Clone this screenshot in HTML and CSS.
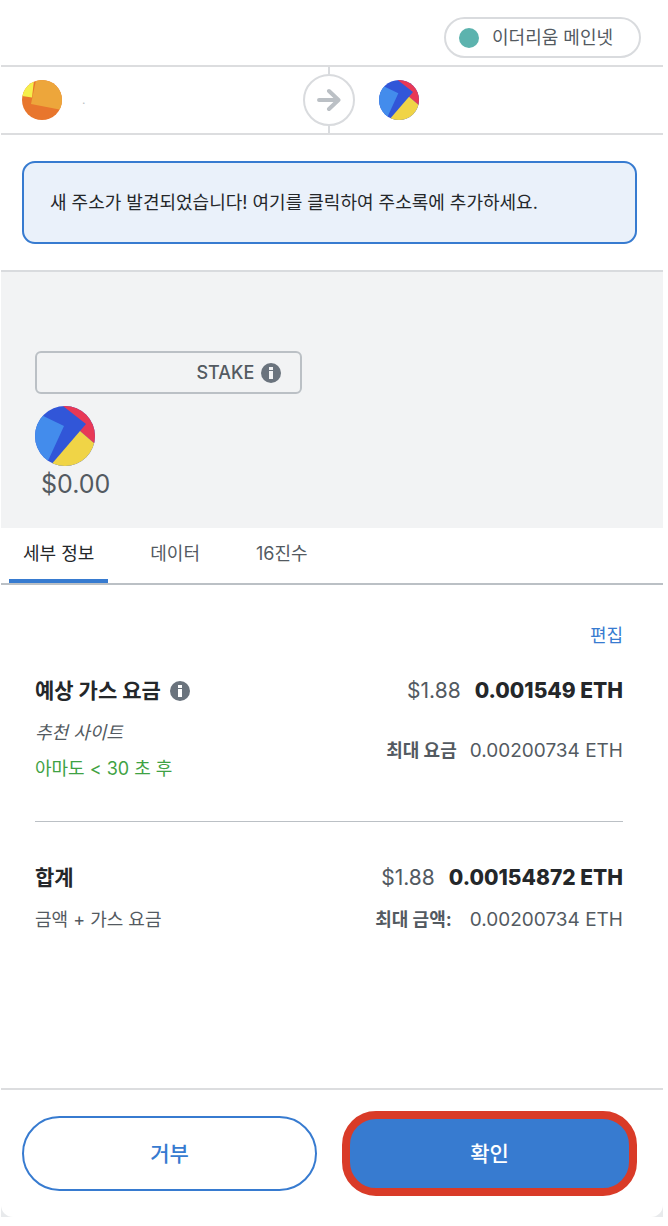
FILE: index.html
```
<!DOCTYPE html>
<html lang="ko">
<head>
  <meta charset="UTF-8" />
  <meta name="viewport" content="width=device-width, initial-scale=1.0"/>
  <title>거래 확인</title>
  <link rel="stylesheet" href="styles.css">
</head>
<body>
  <div class="popup">
    <div class="panel">
      <header class="network-bar">
        <div class="network"><span class="network-dot"></span>이더리움 메인넷</div>
      </header>

      <section class="accounts">
        <div class="sender">
          <svg class="avatar" viewBox="0 0 40 40">
            <clipPath id="clip-sender"><circle cx="20" cy="20" r="20"/></clipPath>
            <g clip-path="url(#clip-sender)">
              <rect width="40" height="40" fill="#e8762d"/>
              <path d="M0 0H12L10 17.500L0 16Z" fill="#f5ef4b"/>
              <path d="M14 0H40V30L9 24Z" fill="#eda63b"/>
            </g>
          </svg>
          <span class="sender-name">.</span>
        </div>
        <div class="arrow">
          <svg viewBox="0 0 24 24">
            <path d="M2 12H21M12 3L21.500 12L12 21" fill="none" stroke="#bbc0c5" stroke-width="4" stroke-linecap="round" stroke-linejoin="round"/>
          </svg>
        </div>
        <div class="recipient">
          <svg class="avatar" viewBox="0 0 60 60">
            <clipPath id="clip-recipient"><circle cx="30" cy="30" r="30"/></clipPath>
            <g clip-path="url(#clip-recipient)">
              <rect width="60" height="60" fill="#3156d8"/>
              <path d="M28 0H60V38L45 25L51 18Z" fill="#e83856"/>
              <path d="M45 25L60 38V60H15Z" fill="#f0d446"/>
              <path d="M0 6L29 20L12 57L0 60Z" fill="#438cec"/>
            </g>
          </svg>
        </div>
      </section>

      <section class="notice-wrap">
        <button class="notice" type="button">새 주소가 발견되었습니다! 여기를 클릭하여 주소록에 추가하세요.</button>
      </section>

      <section class="summary">
        <div class="action">
          STAKE
          <svg class="info" viewBox="0 0 20 20">
            <circle cx="10" cy="10" r="10" fill="#6a737d"/>
            <path d="M8 4H12V7H8ZM8 8H12V16H8Z" fill="#f2f3f4"/>
          </svg>
        </div>
        <svg class="avatar-large" viewBox="0 0 60 60">
          <g clip-path="url(#clip-recipient)">
            <rect width="60" height="60" fill="#3156d8"/>
            <path d="M28 0H60V38L45 25L51 18Z" fill="#e83856"/>
            <path d="M45 25L60 38V60H15Z" fill="#f0d446"/>
            <path d="M0 6L29 20L12 57L0 60Z" fill="#438cec"/>
          </g>
        </svg>
        <div class="amount">$0.00</div>
      </section>

      <nav class="tabs">
        <button class="active" type="button">세부 정보</button>
        <button type="button">데이터</button>
        <button type="button">16진수</button>
      </nav>

      <main class="details">
        <a class="edit" href="#">편집</a>

        <section class="fee">
          <div class="row main-row">
            <h2>예상 가스 요금
              <svg class="info" viewBox="0 0 20 20">
                <circle cx="10" cy="10" r="10" fill="#6a737d"/>
                <path d="M8 4H12V7H8ZM8 8H12V16H8Z" fill="#fff"/>
              </svg>
            </h2>
            <div class="price"><span>$1.88</span><strong>0.001549 ETH</strong></div>
          </div>
          <div class="row sub-row">
            <div>
              <p><em>추천 사이트</em></p>
              <p class="time">아마도 &lt; 30 초 후</p>
            </div>
            <div class="max"><b>최대 요금</b><span>0.00200734 ETH</span></div>
          </div>
        </section>

        <section class="total">
          <div class="row main-row">
            <h2>합계</h2>
            <div class="price"><span>$1.88</span><strong>0.00154872 ETH</strong></div>
          </div>
          <div class="row sub-row">
            <p>금액 + 가스 요금</p>
            <div class="max max-total"><b>최대 금액:</b><span>0.00200734 ETH</span></div>
          </div>
        </section>
      </main>

      <footer>
        <button class="reject" type="button">거부</button>
        <button class="confirm" type="button">확인</button>
      </footer>
    </div>
  </div>
</body>
</html>
```

FILE: styles.css
```
* { margin: 0; padding: 0; box-sizing: border-box; }

body {
  font-family: Inter, "Noto Sans CJK KR", sans-serif;
  font-size: 18px;
  line-height: 28px;
  color: #535a61;
  background: #fff;
}

button {
  font-family: inherit;
  font-size: 18px;
  cursor: pointer;
}

.popup {
  margin: 0 5px 0 1px;
  background: #e8eaec;
}

.panel {
  background: #fff;
  border-radius: 0 0 12px 12px;
}

.network-bar {
  display: flex;
  justify-content: flex-end;
  padding: 17px 22px 7px;
  border-bottom: 2px solid #dcdddf;
}

.network {
  display: flex;
  align-items: center;
  height: 41px;
  padding: 0 26px 0 13px;
  border: 2px solid #d9dbde;
  border-radius: 21px;
}

.network-dot {
  width: 20px;
  height: 20px;
  margin-right: 13px;
  border-radius: 50%;
  background: #5cb3ae;
}

/* sender -> recipient */
.accounts {
  display: grid;
  grid-template-columns: calc(50% - 29px) 52px 1fr;
  align-items: center;
  height: 68px;
  border-bottom: 2px solid #dcdddf;
}

.avatar {
  display: block;
  width: 40px;
  height: 40px;
}

.sender {
  display: flex;
  align-items: center;
  gap: 20px;
  padding-left: 21px;
}

.sender-name {
  font-size: 12px;
  color: #bbc0c5;
}

.recipient {
  padding-left: 24px;
}

.arrow {
  display: flex;
  flex-direction: column;
  align-items: center;
  height: 66px;
}

.arrow::before,
.arrow::after {
  content: "";
  flex: 1;
  width: 2px;
  background: #d9dbde;
}

.arrow svg {
  width: 52px;
  height: 52px;
  padding: 12px;
  border: 2px solid #d9dbde;
  border-radius: 50%;
}

.notice-wrap {
  padding: 26px 26px 26px 21px;
  border-bottom: 2px solid #d9dbde;
}

.notice {
  display: block;
  width: 100%;
  min-height: 83px;
  padding: 0 26px 4px;
  text-align: left;
  color: #24272a;
  background: #eaf1fa;
  border: 2px solid #377bd0;
  border-radius: 13px;
}

.summary {
  padding: 79px 34px 28px;
  background: #f2f3f4;
}

.action {
  display: flex;
  justify-content: flex-end;
  align-items: center;
  gap: 7px;
  width: 45%;
  height: 43px;
  padding-right: 19px;
  font-weight: 500;
  border: 2px solid #bbc0c5;
  border-radius: 6px;
}

.info {
  flex: none;
  width: 20px;
  height: 20px;
}

.avatar-large {
  display: block;
  width: 60px;
  height: 60px;
  margin-top: 12px;
}

.amount {
  padding: 2px 0 0 6px;
  font-size: 25px;
  line-height: 32px;
}

.tabs {
  display: flex;
  gap: 28px;
  padding-left: 8px;
  border-bottom: 2px solid #bbc0c5;
}

.tabs button {
  height: 55px;
  padding: 0 14px 4px;
  color: #535a61;
  background: none;
  border: none;
  border-bottom: 4px solid transparent;
}

.tabs button.active {
  color: #24272a;
  border-bottom-color: #377bd0;
}

.details {
  padding: 37px 40px 150px 34px;
}

.edit {
  display: block;
  width: fit-content;
  margin: 0 0 26px auto;
  color: #377bd0;
  text-decoration: none;
}

.row {
  display: flex;
  justify-content: space-between;
  align-items: center;
}

.main-row {
  margin-bottom: 9px;
  font-size: 21px;
  line-height: 30px;
}

.main-row h2 {
  display: flex;
  align-items: center;
  gap: 9px;
  font-size: 21px;
  color: #24272a;
}

.price {
  display: flex;
  gap: 14px;
}

.price strong {
  font-weight: 800;
  color: #24272a;
}

.sub-row {
  line-height: 36px;
}

.time {
  color: #3fa244;
}

.max {
  display: flex;
  gap: 13px;
}

.max span {
  font-size: 19px;
}

.max-total {
  gap: 18px;
}

.fee {
  padding-bottom: 34px;
  border-bottom: 1px solid #bbc0c5;
}

.total {
  padding-top: 41px;
}

footer {
  display: grid;
  grid-template-columns: 1fr 1fr;
  align-items: center;
  gap: 25px;
  padding: 21px 26px 21px 21px;
  border-top: 2px solid #dcdddf;
}

footer button {
  padding-bottom: 4px;
  font-size: 21px;
  font-weight: 500;
}

.reject {
  height: 75px;
  color: #377bd0;
  background: #fff;
  border: 2px solid #377bd0;
  border-radius: 38px;
}

.confirm {
  height: 85px;
  color: #fff;
  background: #377bd0;
  border: 8px solid #d93b28;
  border-radius: 34px;
}
```
